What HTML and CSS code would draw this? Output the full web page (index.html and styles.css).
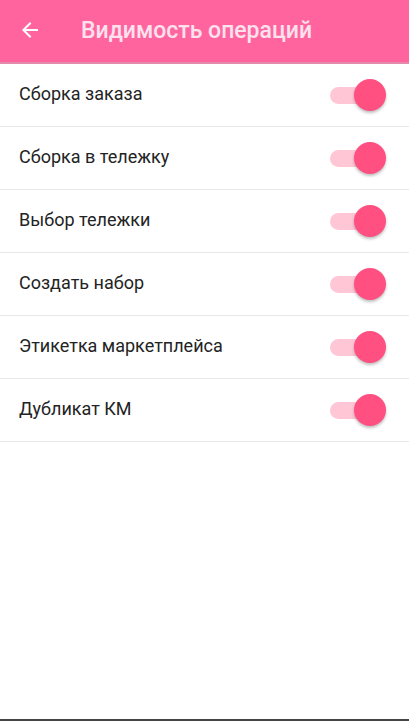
FILE: index.html
```html
<!DOCTYPE html>
<html lang="ru">
<head>
    <meta charset="UTF-8">
    <title>Видимость операций</title>
    <link rel="stylesheet" href="styles.css">
</head>
<body>
    <div class="screen">
        <div class="toolbar">
            <span class="back">
                <svg width="24" height="24" viewBox="0 0 24 24"><path d="M20 11H7.83l5.59-5.59L12 4l-8 8 8 8 1.41-1.41L7.83 13H20v-2z" fill="#fff"/></svg>
            </span>
            <h1 class="title">Видимость операций</h1>
        </div>
        <ul class="list">
            <li class="row"><span class="label">Сборка заказа</span><span class="switch"><em></em></span></li>
            <li class="row"><span class="label">Сборка в тележку</span><span class="switch"><em></em></span></li>
            <li class="row"><span class="label">Выбор тележки</span><span class="switch"><em></em></span></li>
            <li class="row"><span class="label">Создать набор</span><span class="switch"><em></em></span></li>
            <li class="row"><span class="label">Этикетка маркетплейса</span><span class="switch"><em></em></span></li>
            <li class="row"><span class="label">Дубликат КМ</span><span class="switch"><em></em></span></li>
        </ul>
        <div class="navbar"></div>
    </div>
</body>
</html>
```
FILE: styles.css
```css
* {
    margin: 0;
    padding: 0;
    box-sizing: border-box;
}

html,
body {
    height: 100%;
}

body {
    font-family: Roboto, "Noto Sans", sans-serif;
    background: #fff;
}

.screen {
    height: 100%;
    display: flex;
    flex-direction: column;
}

.toolbar {
    height: 64px;
    background: #ff649f;
    display: flex;
    align-items: center;
    padding: 0 0 2px 18px;
    border-bottom: 2px solid #e48aab;
    flex-shrink: 0;
}

.back {
    width: 24px;
    height: 24px;
    display: flex;
}

.title {
    margin-left: 39px;
    font-size: 23px;
    font-weight: 500;
    color: #fde1ed;
}

.list {
    list-style: none;
    flex: 1;
}

.row {
    height: 63px;
    border-bottom: 1px solid #e8e8e8;
    display: flex;
    align-items: center;
    justify-content: space-between;
    padding: 0 31px 0 19px;
}

.label {
    font-size: 18px;
    color: #232323;
    margin-bottom: 3px;
}

.switch {
    position: relative;
    width: 48px;
    height: 17px;
    border-radius: 9px;
    background: #ffc6d6;
}

.switch em {
    position: absolute;
    right: -8px;
    top: -8px;
    width: 32px;
    height: 32px;
    border-radius: 50%;
    background: #ff5081;
    box-shadow: 0 2px 3px rgba(0, 0, 0, .25);
}

.navbar {
    height: 2px;
    background: #444;
    flex-shrink: 0;
}
```
